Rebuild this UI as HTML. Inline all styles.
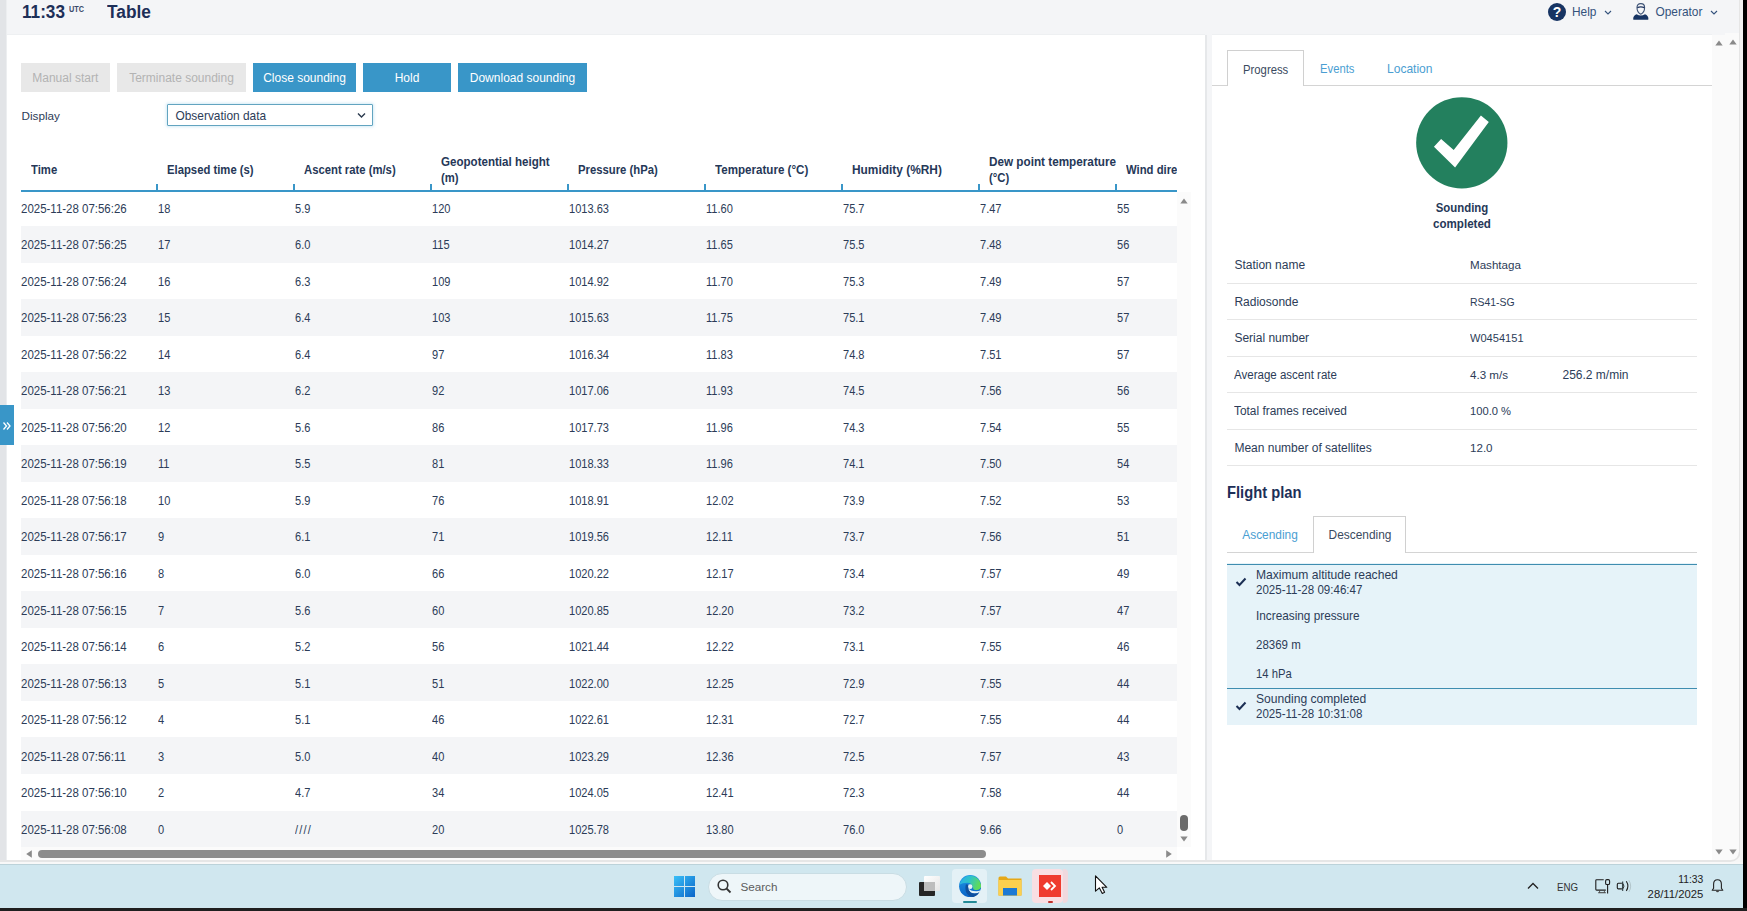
<!DOCTYPE html><html><head><meta charset="utf-8"><style>
html,body{margin:0;padding:0;}
body{width:1747px;height:911px;overflow:hidden;position:relative;background:#f4f5f7;font-family:"Liberation Sans",sans-serif;}
.t{position:absolute;white-space:nowrap;}
.r{position:absolute;}
svg{position:absolute;}
</style></head><body>
<div class="r" style="left:0px;top:0px;width:5.5px;height:860px;background:#e2e4e7;"></div>
<div class="r" style="left:5.5px;top:0px;width:1.5px;height:860px;background:#eceef0;"></div>
<div class="t" style="left:22.00px;top:2px;font-size:17.5px;line-height:20px;color:#1d2f58;font-weight:bold;transform:scaleX(0.98);transform-origin:0 0;">11:33</div>
<div class="t" style="left:69.00px;top:-1px;font-size:8.8px;line-height:20px;color:#3a4a6a;font-weight:bold;transform:scaleX(0.83);transform-origin:0 0;">UTC</div>
<div class="t" style="left:107.00px;top:2px;font-size:18.7px;line-height:20px;color:#1d2f58;font-weight:bold;transform:scaleX(0.925);transform-origin:0 0;">Table</div>
<div class="r" style="left:7px;top:35px;width:1198px;height:825px;background:#ffffff;"></div>
<div class="r" style="left:21px;top:62.5px;width:88.5px;height:29.3px;background:#e8e8e8;"></div>
<div class="t" style="left:-134.75px;width:400px;text-align:center;top:68px;font-size:12px;line-height:20px;color:#b3b3b3;font-weight:normal;">Manual start</div>
<div class="r" style="left:117px;top:62.5px;width:129px;height:29.3px;background:#e8e8e8;"></div>
<div class="t" style="left:-18.50px;width:400px;text-align:center;top:68px;font-size:12px;line-height:20px;color:#b3b3b3;font-weight:normal;">Terminate sounding</div>
<div class="r" style="left:253px;top:62.5px;width:103px;height:29.3px;background:#3996c8;"></div>
<div class="t" style="left:104.50px;width:400px;text-align:center;top:68px;font-size:12px;line-height:20px;color:#ffffff;font-weight:normal;">Close sounding</div>
<div class="r" style="left:363px;top:62.5px;width:88px;height:29.3px;background:#3996c8;"></div>
<div class="t" style="left:207.00px;width:400px;text-align:center;top:68px;font-size:12px;line-height:20px;color:#ffffff;font-weight:normal;">Hold</div>
<div class="r" style="left:458px;top:62.5px;width:129px;height:29.3px;background:#3996c8;"></div>
<div class="t" style="left:322.50px;width:400px;text-align:center;top:68px;font-size:12px;line-height:20px;color:#ffffff;font-weight:normal;">Download sounding</div>
<div class="t" style="left:21.50px;top:106px;font-size:11.7px;line-height:20px;color:#2c3c58;font-weight:normal;">Display</div>
<div class="r" style="left:167px;top:104px;width:206px;height:22px;background:#ffffff;box-sizing:border-box;border:1px solid #62a4c0;border-radius:1px;box-shadow:0 0 3px 1px rgba(130,195,230,0.35);"></div>
<div class="t" style="left:175.50px;top:106px;font-size:11.9px;line-height:20px;color:#2c3c58;font-weight:normal;">Observation data</div>
<svg style="left:357px;top:112px" width="9" height="7" viewBox="0 0 9 7"><path d="M1 1.5 L4.5 5 L8 1.5" fill="none" stroke="#2b3a4e" stroke-width="1.4"/></svg>
<div class="r" style="left:21px;top:140px;width:1156px;height:720px;overflow:hidden">
<div class="t" style="left:10.00px;top:20px;font-size:11.9px;line-height:20px;color:#263858;font-weight:bold;transform:scaleX(0.95);transform-origin:0 0;">Time</div>
<div class="t" style="left:146.00px;top:20px;font-size:11.9px;line-height:20px;color:#263858;font-weight:bold;transform:scaleX(0.95);transform-origin:0 0;">Elapsed time (s)</div>
<div class="t" style="left:283.00px;top:20px;font-size:11.9px;line-height:20px;color:#263858;font-weight:bold;transform:scaleX(0.95);transform-origin:0 0;">Ascent rate (m/s)</div>
<div class="t" style="left:420.00px;top:12px;font-size:11.9px;line-height:20px;color:#263858;font-weight:bold;transform:scaleX(0.973);transform-origin:0 0;">Geopotential height</div>
<div class="t" style="left:420.00px;top:28px;font-size:11.9px;line-height:20px;color:#263858;font-weight:bold;transform:scaleX(0.95);transform-origin:0 0;">(m)</div>
<div class="t" style="left:557.00px;top:20px;font-size:11.9px;line-height:20px;color:#263858;font-weight:bold;transform:scaleX(0.95);transform-origin:0 0;">Pressure (hPa)</div>
<div class="t" style="left:694.00px;top:20px;font-size:11.9px;line-height:20px;color:#263858;font-weight:bold;transform:scaleX(0.975);transform-origin:0 0;">Temperature (°C)</div>
<div class="t" style="left:831.00px;top:20px;font-size:11.9px;line-height:20px;color:#263858;font-weight:bold;">Humidity (%RH)</div>
<div class="t" style="left:968.00px;top:12px;font-size:11.9px;line-height:20px;color:#263858;font-weight:bold;transform:scaleX(0.986);transform-origin:0 0;">Dew point temperature</div>
<div class="t" style="left:968.00px;top:28px;font-size:11.9px;line-height:20px;color:#263858;font-weight:bold;transform:scaleX(0.95);transform-origin:0 0;">(°C)</div>
<div class="t" style="left:1105.00px;top:20px;font-size:11.9px;line-height:20px;color:#263858;font-weight:bold;transform:scaleX(0.95);transform-origin:0 0;">Wind dire</div>
<div class="r" style="left:0px;top:49.5px;width:1156px;height:2.5px;background:#3996c8;"></div>
<div class="r" style="left:135px;top:44px;width:2px;height:6px;background:#3996c8;"></div>
<div class="r" style="left:272px;top:44px;width:2px;height:6px;background:#3996c8;"></div>
<div class="r" style="left:409px;top:44px;width:2px;height:6px;background:#3996c8;"></div>
<div class="r" style="left:546px;top:44px;width:2px;height:6px;background:#3996c8;"></div>
<div class="r" style="left:683px;top:44px;width:2px;height:6px;background:#3996c8;"></div>
<div class="r" style="left:820px;top:44px;width:2px;height:6px;background:#3996c8;"></div>
<div class="r" style="left:957px;top:44px;width:2px;height:6px;background:#3996c8;"></div>
<div class="r" style="left:1094px;top:44px;width:2px;height:6px;background:#3996c8;"></div>
<div class="t" style="left:0.00px;top:59px;font-size:11.9px;line-height:20px;color:#2c3c58;font-weight:normal;transform:scaleX(0.965);transform-origin:0 0;">2025-11-28 07:56:26</div>
<div class="t" style="left:136.90px;top:59px;font-size:11.9px;line-height:20px;color:#2c3c58;font-weight:normal;transform:scaleX(0.93);transform-origin:0 0;">18</div>
<div class="t" style="left:273.90px;top:59px;font-size:11.9px;line-height:20px;color:#2c3c58;font-weight:normal;transform:scaleX(0.93);transform-origin:0 0;">5.9</div>
<div class="t" style="left:410.90px;top:59px;font-size:11.9px;line-height:20px;color:#2c3c58;font-weight:normal;transform:scaleX(0.93);transform-origin:0 0;">120</div>
<div class="t" style="left:547.90px;top:59px;font-size:11.9px;line-height:20px;color:#2c3c58;font-weight:normal;transform:scaleX(0.93);transform-origin:0 0;">1013.63</div>
<div class="t" style="left:684.90px;top:59px;font-size:11.9px;line-height:20px;color:#2c3c58;font-weight:normal;transform:scaleX(0.93);transform-origin:0 0;">11.60</div>
<div class="t" style="left:821.90px;top:59px;font-size:11.9px;line-height:20px;color:#2c3c58;font-weight:normal;transform:scaleX(0.93);transform-origin:0 0;">75.7</div>
<div class="t" style="left:958.90px;top:59px;font-size:11.9px;line-height:20px;color:#2c3c58;font-weight:normal;transform:scaleX(0.93);transform-origin:0 0;">7.47</div>
<div class="t" style="left:1095.90px;top:59px;font-size:11.9px;line-height:20px;color:#2c3c58;font-weight:normal;transform:scaleX(0.93);transform-origin:0 0;">55</div>
<div class="r" style="left:0px;top:86.03px;width:1156px;height:36.53px;background:#f4f5f7;"></div>
<div class="t" style="left:0.00px;top:95px;font-size:11.9px;line-height:20px;color:#2c3c58;font-weight:normal;transform:scaleX(0.965);transform-origin:0 0;">2025-11-28 07:56:25</div>
<div class="t" style="left:136.90px;top:95px;font-size:11.9px;line-height:20px;color:#2c3c58;font-weight:normal;transform:scaleX(0.93);transform-origin:0 0;">17</div>
<div class="t" style="left:273.90px;top:95px;font-size:11.9px;line-height:20px;color:#2c3c58;font-weight:normal;transform:scaleX(0.93);transform-origin:0 0;">6.0</div>
<div class="t" style="left:410.90px;top:95px;font-size:11.9px;line-height:20px;color:#2c3c58;font-weight:normal;transform:scaleX(0.93);transform-origin:0 0;">115</div>
<div class="t" style="left:547.90px;top:95px;font-size:11.9px;line-height:20px;color:#2c3c58;font-weight:normal;transform:scaleX(0.93);transform-origin:0 0;">1014.27</div>
<div class="t" style="left:684.90px;top:95px;font-size:11.9px;line-height:20px;color:#2c3c58;font-weight:normal;transform:scaleX(0.93);transform-origin:0 0;">11.65</div>
<div class="t" style="left:821.90px;top:95px;font-size:11.9px;line-height:20px;color:#2c3c58;font-weight:normal;transform:scaleX(0.93);transform-origin:0 0;">75.5</div>
<div class="t" style="left:958.90px;top:95px;font-size:11.9px;line-height:20px;color:#2c3c58;font-weight:normal;transform:scaleX(0.93);transform-origin:0 0;">7.48</div>
<div class="t" style="left:1095.90px;top:95px;font-size:11.9px;line-height:20px;color:#2c3c58;font-weight:normal;transform:scaleX(0.93);transform-origin:0 0;">56</div>
<div class="t" style="left:0.00px;top:132px;font-size:11.9px;line-height:20px;color:#2c3c58;font-weight:normal;transform:scaleX(0.965);transform-origin:0 0;">2025-11-28 07:56:24</div>
<div class="t" style="left:136.90px;top:132px;font-size:11.9px;line-height:20px;color:#2c3c58;font-weight:normal;transform:scaleX(0.93);transform-origin:0 0;">16</div>
<div class="t" style="left:273.90px;top:132px;font-size:11.9px;line-height:20px;color:#2c3c58;font-weight:normal;transform:scaleX(0.93);transform-origin:0 0;">6.3</div>
<div class="t" style="left:410.90px;top:132px;font-size:11.9px;line-height:20px;color:#2c3c58;font-weight:normal;transform:scaleX(0.93);transform-origin:0 0;">109</div>
<div class="t" style="left:547.90px;top:132px;font-size:11.9px;line-height:20px;color:#2c3c58;font-weight:normal;transform:scaleX(0.93);transform-origin:0 0;">1014.92</div>
<div class="t" style="left:684.90px;top:132px;font-size:11.9px;line-height:20px;color:#2c3c58;font-weight:normal;transform:scaleX(0.93);transform-origin:0 0;">11.70</div>
<div class="t" style="left:821.90px;top:132px;font-size:11.9px;line-height:20px;color:#2c3c58;font-weight:normal;transform:scaleX(0.93);transform-origin:0 0;">75.3</div>
<div class="t" style="left:958.90px;top:132px;font-size:11.9px;line-height:20px;color:#2c3c58;font-weight:normal;transform:scaleX(0.93);transform-origin:0 0;">7.49</div>
<div class="t" style="left:1095.90px;top:132px;font-size:11.9px;line-height:20px;color:#2c3c58;font-weight:normal;transform:scaleX(0.93);transform-origin:0 0;">57</div>
<div class="r" style="left:0px;top:159.09px;width:1156px;height:36.53px;background:#f4f5f7;"></div>
<div class="t" style="left:0.00px;top:168px;font-size:11.9px;line-height:20px;color:#2c3c58;font-weight:normal;transform:scaleX(0.965);transform-origin:0 0;">2025-11-28 07:56:23</div>
<div class="t" style="left:136.90px;top:168px;font-size:11.9px;line-height:20px;color:#2c3c58;font-weight:normal;transform:scaleX(0.93);transform-origin:0 0;">15</div>
<div class="t" style="left:273.90px;top:168px;font-size:11.9px;line-height:20px;color:#2c3c58;font-weight:normal;transform:scaleX(0.93);transform-origin:0 0;">6.4</div>
<div class="t" style="left:410.90px;top:168px;font-size:11.9px;line-height:20px;color:#2c3c58;font-weight:normal;transform:scaleX(0.93);transform-origin:0 0;">103</div>
<div class="t" style="left:547.90px;top:168px;font-size:11.9px;line-height:20px;color:#2c3c58;font-weight:normal;transform:scaleX(0.93);transform-origin:0 0;">1015.63</div>
<div class="t" style="left:684.90px;top:168px;font-size:11.9px;line-height:20px;color:#2c3c58;font-weight:normal;transform:scaleX(0.93);transform-origin:0 0;">11.75</div>
<div class="t" style="left:821.90px;top:168px;font-size:11.9px;line-height:20px;color:#2c3c58;font-weight:normal;transform:scaleX(0.93);transform-origin:0 0;">75.1</div>
<div class="t" style="left:958.90px;top:168px;font-size:11.9px;line-height:20px;color:#2c3c58;font-weight:normal;transform:scaleX(0.93);transform-origin:0 0;">7.49</div>
<div class="t" style="left:1095.90px;top:168px;font-size:11.9px;line-height:20px;color:#2c3c58;font-weight:normal;transform:scaleX(0.93);transform-origin:0 0;">57</div>
<div class="t" style="left:0.00px;top:205px;font-size:11.9px;line-height:20px;color:#2c3c58;font-weight:normal;transform:scaleX(0.965);transform-origin:0 0;">2025-11-28 07:56:22</div>
<div class="t" style="left:136.90px;top:205px;font-size:11.9px;line-height:20px;color:#2c3c58;font-weight:normal;transform:scaleX(0.93);transform-origin:0 0;">14</div>
<div class="t" style="left:273.90px;top:205px;font-size:11.9px;line-height:20px;color:#2c3c58;font-weight:normal;transform:scaleX(0.93);transform-origin:0 0;">6.4</div>
<div class="t" style="left:410.90px;top:205px;font-size:11.9px;line-height:20px;color:#2c3c58;font-weight:normal;transform:scaleX(0.93);transform-origin:0 0;">97</div>
<div class="t" style="left:547.90px;top:205px;font-size:11.9px;line-height:20px;color:#2c3c58;font-weight:normal;transform:scaleX(0.93);transform-origin:0 0;">1016.34</div>
<div class="t" style="left:684.90px;top:205px;font-size:11.9px;line-height:20px;color:#2c3c58;font-weight:normal;transform:scaleX(0.93);transform-origin:0 0;">11.83</div>
<div class="t" style="left:821.90px;top:205px;font-size:11.9px;line-height:20px;color:#2c3c58;font-weight:normal;transform:scaleX(0.93);transform-origin:0 0;">74.8</div>
<div class="t" style="left:958.90px;top:205px;font-size:11.9px;line-height:20px;color:#2c3c58;font-weight:normal;transform:scaleX(0.93);transform-origin:0 0;">7.51</div>
<div class="t" style="left:1095.90px;top:205px;font-size:11.9px;line-height:20px;color:#2c3c58;font-weight:normal;transform:scaleX(0.93);transform-origin:0 0;">57</div>
<div class="r" style="left:0px;top:232.15px;width:1156px;height:36.53px;background:#f4f5f7;"></div>
<div class="t" style="left:0.00px;top:241px;font-size:11.9px;line-height:20px;color:#2c3c58;font-weight:normal;transform:scaleX(0.965);transform-origin:0 0;">2025-11-28 07:56:21</div>
<div class="t" style="left:136.90px;top:241px;font-size:11.9px;line-height:20px;color:#2c3c58;font-weight:normal;transform:scaleX(0.93);transform-origin:0 0;">13</div>
<div class="t" style="left:273.90px;top:241px;font-size:11.9px;line-height:20px;color:#2c3c58;font-weight:normal;transform:scaleX(0.93);transform-origin:0 0;">6.2</div>
<div class="t" style="left:410.90px;top:241px;font-size:11.9px;line-height:20px;color:#2c3c58;font-weight:normal;transform:scaleX(0.93);transform-origin:0 0;">92</div>
<div class="t" style="left:547.90px;top:241px;font-size:11.9px;line-height:20px;color:#2c3c58;font-weight:normal;transform:scaleX(0.93);transform-origin:0 0;">1017.06</div>
<div class="t" style="left:684.90px;top:241px;font-size:11.9px;line-height:20px;color:#2c3c58;font-weight:normal;transform:scaleX(0.93);transform-origin:0 0;">11.93</div>
<div class="t" style="left:821.90px;top:241px;font-size:11.9px;line-height:20px;color:#2c3c58;font-weight:normal;transform:scaleX(0.93);transform-origin:0 0;">74.5</div>
<div class="t" style="left:958.90px;top:241px;font-size:11.9px;line-height:20px;color:#2c3c58;font-weight:normal;transform:scaleX(0.93);transform-origin:0 0;">7.56</div>
<div class="t" style="left:1095.90px;top:241px;font-size:11.9px;line-height:20px;color:#2c3c58;font-weight:normal;transform:scaleX(0.93);transform-origin:0 0;">56</div>
<div class="t" style="left:0.00px;top:278px;font-size:11.9px;line-height:20px;color:#2c3c58;font-weight:normal;transform:scaleX(0.965);transform-origin:0 0;">2025-11-28 07:56:20</div>
<div class="t" style="left:136.90px;top:278px;font-size:11.9px;line-height:20px;color:#2c3c58;font-weight:normal;transform:scaleX(0.93);transform-origin:0 0;">12</div>
<div class="t" style="left:273.90px;top:278px;font-size:11.9px;line-height:20px;color:#2c3c58;font-weight:normal;transform:scaleX(0.93);transform-origin:0 0;">5.6</div>
<div class="t" style="left:410.90px;top:278px;font-size:11.9px;line-height:20px;color:#2c3c58;font-weight:normal;transform:scaleX(0.93);transform-origin:0 0;">86</div>
<div class="t" style="left:547.90px;top:278px;font-size:11.9px;line-height:20px;color:#2c3c58;font-weight:normal;transform:scaleX(0.93);transform-origin:0 0;">1017.73</div>
<div class="t" style="left:684.90px;top:278px;font-size:11.9px;line-height:20px;color:#2c3c58;font-weight:normal;transform:scaleX(0.93);transform-origin:0 0;">11.96</div>
<div class="t" style="left:821.90px;top:278px;font-size:11.9px;line-height:20px;color:#2c3c58;font-weight:normal;transform:scaleX(0.93);transform-origin:0 0;">74.3</div>
<div class="t" style="left:958.90px;top:278px;font-size:11.9px;line-height:20px;color:#2c3c58;font-weight:normal;transform:scaleX(0.93);transform-origin:0 0;">7.54</div>
<div class="t" style="left:1095.90px;top:278px;font-size:11.9px;line-height:20px;color:#2c3c58;font-weight:normal;transform:scaleX(0.93);transform-origin:0 0;">55</div>
<div class="r" style="left:0px;top:305.21px;width:1156px;height:36.53px;background:#f4f5f7;"></div>
<div class="t" style="left:0.00px;top:314px;font-size:11.9px;line-height:20px;color:#2c3c58;font-weight:normal;transform:scaleX(0.965);transform-origin:0 0;">2025-11-28 07:56:19</div>
<div class="t" style="left:136.90px;top:314px;font-size:11.9px;line-height:20px;color:#2c3c58;font-weight:normal;transform:scaleX(0.93);transform-origin:0 0;">11</div>
<div class="t" style="left:273.90px;top:314px;font-size:11.9px;line-height:20px;color:#2c3c58;font-weight:normal;transform:scaleX(0.93);transform-origin:0 0;">5.5</div>
<div class="t" style="left:410.90px;top:314px;font-size:11.9px;line-height:20px;color:#2c3c58;font-weight:normal;transform:scaleX(0.93);transform-origin:0 0;">81</div>
<div class="t" style="left:547.90px;top:314px;font-size:11.9px;line-height:20px;color:#2c3c58;font-weight:normal;transform:scaleX(0.93);transform-origin:0 0;">1018.33</div>
<div class="t" style="left:684.90px;top:314px;font-size:11.9px;line-height:20px;color:#2c3c58;font-weight:normal;transform:scaleX(0.93);transform-origin:0 0;">11.96</div>
<div class="t" style="left:821.90px;top:314px;font-size:11.9px;line-height:20px;color:#2c3c58;font-weight:normal;transform:scaleX(0.93);transform-origin:0 0;">74.1</div>
<div class="t" style="left:958.90px;top:314px;font-size:11.9px;line-height:20px;color:#2c3c58;font-weight:normal;transform:scaleX(0.93);transform-origin:0 0;">7.50</div>
<div class="t" style="left:1095.90px;top:314px;font-size:11.9px;line-height:20px;color:#2c3c58;font-weight:normal;transform:scaleX(0.93);transform-origin:0 0;">54</div>
<div class="t" style="left:0.00px;top:351px;font-size:11.9px;line-height:20px;color:#2c3c58;font-weight:normal;transform:scaleX(0.965);transform-origin:0 0;">2025-11-28 07:56:18</div>
<div class="t" style="left:136.90px;top:351px;font-size:11.9px;line-height:20px;color:#2c3c58;font-weight:normal;transform:scaleX(0.93);transform-origin:0 0;">10</div>
<div class="t" style="left:273.90px;top:351px;font-size:11.9px;line-height:20px;color:#2c3c58;font-weight:normal;transform:scaleX(0.93);transform-origin:0 0;">5.9</div>
<div class="t" style="left:410.90px;top:351px;font-size:11.9px;line-height:20px;color:#2c3c58;font-weight:normal;transform:scaleX(0.93);transform-origin:0 0;">76</div>
<div class="t" style="left:547.90px;top:351px;font-size:11.9px;line-height:20px;color:#2c3c58;font-weight:normal;transform:scaleX(0.93);transform-origin:0 0;">1018.91</div>
<div class="t" style="left:684.90px;top:351px;font-size:11.9px;line-height:20px;color:#2c3c58;font-weight:normal;transform:scaleX(0.93);transform-origin:0 0;">12.02</div>
<div class="t" style="left:821.90px;top:351px;font-size:11.9px;line-height:20px;color:#2c3c58;font-weight:normal;transform:scaleX(0.93);transform-origin:0 0;">73.9</div>
<div class="t" style="left:958.90px;top:351px;font-size:11.9px;line-height:20px;color:#2c3c58;font-weight:normal;transform:scaleX(0.93);transform-origin:0 0;">7.52</div>
<div class="t" style="left:1095.90px;top:351px;font-size:11.9px;line-height:20px;color:#2c3c58;font-weight:normal;transform:scaleX(0.93);transform-origin:0 0;">53</div>
<div class="r" style="left:0px;top:378.27px;width:1156px;height:36.53px;background:#f4f5f7;"></div>
<div class="t" style="left:0.00px;top:387px;font-size:11.9px;line-height:20px;color:#2c3c58;font-weight:normal;transform:scaleX(0.965);transform-origin:0 0;">2025-11-28 07:56:17</div>
<div class="t" style="left:136.90px;top:387px;font-size:11.9px;line-height:20px;color:#2c3c58;font-weight:normal;transform:scaleX(0.93);transform-origin:0 0;">9</div>
<div class="t" style="left:273.90px;top:387px;font-size:11.9px;line-height:20px;color:#2c3c58;font-weight:normal;transform:scaleX(0.93);transform-origin:0 0;">6.1</div>
<div class="t" style="left:410.90px;top:387px;font-size:11.9px;line-height:20px;color:#2c3c58;font-weight:normal;transform:scaleX(0.93);transform-origin:0 0;">71</div>
<div class="t" style="left:547.90px;top:387px;font-size:11.9px;line-height:20px;color:#2c3c58;font-weight:normal;transform:scaleX(0.93);transform-origin:0 0;">1019.56</div>
<div class="t" style="left:684.90px;top:387px;font-size:11.9px;line-height:20px;color:#2c3c58;font-weight:normal;transform:scaleX(0.93);transform-origin:0 0;">12.11</div>
<div class="t" style="left:821.90px;top:387px;font-size:11.9px;line-height:20px;color:#2c3c58;font-weight:normal;transform:scaleX(0.93);transform-origin:0 0;">73.7</div>
<div class="t" style="left:958.90px;top:387px;font-size:11.9px;line-height:20px;color:#2c3c58;font-weight:normal;transform:scaleX(0.93);transform-origin:0 0;">7.56</div>
<div class="t" style="left:1095.90px;top:387px;font-size:11.9px;line-height:20px;color:#2c3c58;font-weight:normal;transform:scaleX(0.93);transform-origin:0 0;">51</div>
<div class="t" style="left:0.00px;top:424px;font-size:11.9px;line-height:20px;color:#2c3c58;font-weight:normal;transform:scaleX(0.965);transform-origin:0 0;">2025-11-28 07:56:16</div>
<div class="t" style="left:136.90px;top:424px;font-size:11.9px;line-height:20px;color:#2c3c58;font-weight:normal;transform:scaleX(0.93);transform-origin:0 0;">8</div>
<div class="t" style="left:273.90px;top:424px;font-size:11.9px;line-height:20px;color:#2c3c58;font-weight:normal;transform:scaleX(0.93);transform-origin:0 0;">6.0</div>
<div class="t" style="left:410.90px;top:424px;font-size:11.9px;line-height:20px;color:#2c3c58;font-weight:normal;transform:scaleX(0.93);transform-origin:0 0;">66</div>
<div class="t" style="left:547.90px;top:424px;font-size:11.9px;line-height:20px;color:#2c3c58;font-weight:normal;transform:scaleX(0.93);transform-origin:0 0;">1020.22</div>
<div class="t" style="left:684.90px;top:424px;font-size:11.9px;line-height:20px;color:#2c3c58;font-weight:normal;transform:scaleX(0.93);transform-origin:0 0;">12.17</div>
<div class="t" style="left:821.90px;top:424px;font-size:11.9px;line-height:20px;color:#2c3c58;font-weight:normal;transform:scaleX(0.93);transform-origin:0 0;">73.4</div>
<div class="t" style="left:958.90px;top:424px;font-size:11.9px;line-height:20px;color:#2c3c58;font-weight:normal;transform:scaleX(0.93);transform-origin:0 0;">7.57</div>
<div class="t" style="left:1095.90px;top:424px;font-size:11.9px;line-height:20px;color:#2c3c58;font-weight:normal;transform:scaleX(0.93);transform-origin:0 0;">49</div>
<div class="r" style="left:0px;top:451.33px;width:1156px;height:36.53px;background:#f4f5f7;"></div>
<div class="t" style="left:0.00px;top:461px;font-size:11.9px;line-height:20px;color:#2c3c58;font-weight:normal;transform:scaleX(0.965);transform-origin:0 0;">2025-11-28 07:56:15</div>
<div class="t" style="left:136.90px;top:461px;font-size:11.9px;line-height:20px;color:#2c3c58;font-weight:normal;transform:scaleX(0.93);transform-origin:0 0;">7</div>
<div class="t" style="left:273.90px;top:461px;font-size:11.9px;line-height:20px;color:#2c3c58;font-weight:normal;transform:scaleX(0.93);transform-origin:0 0;">5.6</div>
<div class="t" style="left:410.90px;top:461px;font-size:11.9px;line-height:20px;color:#2c3c58;font-weight:normal;transform:scaleX(0.93);transform-origin:0 0;">60</div>
<div class="t" style="left:547.90px;top:461px;font-size:11.9px;line-height:20px;color:#2c3c58;font-weight:normal;transform:scaleX(0.93);transform-origin:0 0;">1020.85</div>
<div class="t" style="left:684.90px;top:461px;font-size:11.9px;line-height:20px;color:#2c3c58;font-weight:normal;transform:scaleX(0.93);transform-origin:0 0;">12.20</div>
<div class="t" style="left:821.90px;top:461px;font-size:11.9px;line-height:20px;color:#2c3c58;font-weight:normal;transform:scaleX(0.93);transform-origin:0 0;">73.2</div>
<div class="t" style="left:958.90px;top:461px;font-size:11.9px;line-height:20px;color:#2c3c58;font-weight:normal;transform:scaleX(0.93);transform-origin:0 0;">7.57</div>
<div class="t" style="left:1095.90px;top:461px;font-size:11.9px;line-height:20px;color:#2c3c58;font-weight:normal;transform:scaleX(0.93);transform-origin:0 0;">47</div>
<div class="t" style="left:0.00px;top:497px;font-size:11.9px;line-height:20px;color:#2c3c58;font-weight:normal;transform:scaleX(0.965);transform-origin:0 0;">2025-11-28 07:56:14</div>
<div class="t" style="left:136.90px;top:497px;font-size:11.9px;line-height:20px;color:#2c3c58;font-weight:normal;transform:scaleX(0.93);transform-origin:0 0;">6</div>
<div class="t" style="left:273.90px;top:497px;font-size:11.9px;line-height:20px;color:#2c3c58;font-weight:normal;transform:scaleX(0.93);transform-origin:0 0;">5.2</div>
<div class="t" style="left:410.90px;top:497px;font-size:11.9px;line-height:20px;color:#2c3c58;font-weight:normal;transform:scaleX(0.93);transform-origin:0 0;">56</div>
<div class="t" style="left:547.90px;top:497px;font-size:11.9px;line-height:20px;color:#2c3c58;font-weight:normal;transform:scaleX(0.93);transform-origin:0 0;">1021.44</div>
<div class="t" style="left:684.90px;top:497px;font-size:11.9px;line-height:20px;color:#2c3c58;font-weight:normal;transform:scaleX(0.93);transform-origin:0 0;">12.22</div>
<div class="t" style="left:821.90px;top:497px;font-size:11.9px;line-height:20px;color:#2c3c58;font-weight:normal;transform:scaleX(0.93);transform-origin:0 0;">73.1</div>
<div class="t" style="left:958.90px;top:497px;font-size:11.9px;line-height:20px;color:#2c3c58;font-weight:normal;transform:scaleX(0.93);transform-origin:0 0;">7.55</div>
<div class="t" style="left:1095.90px;top:497px;font-size:11.9px;line-height:20px;color:#2c3c58;font-weight:normal;transform:scaleX(0.93);transform-origin:0 0;">46</div>
<div class="r" style="left:0px;top:524.39px;width:1156px;height:36.53px;background:#f4f5f7;"></div>
<div class="t" style="left:0.00px;top:534px;font-size:11.9px;line-height:20px;color:#2c3c58;font-weight:normal;transform:scaleX(0.965);transform-origin:0 0;">2025-11-28 07:56:13</div>
<div class="t" style="left:136.90px;top:534px;font-size:11.9px;line-height:20px;color:#2c3c58;font-weight:normal;transform:scaleX(0.93);transform-origin:0 0;">5</div>
<div class="t" style="left:273.90px;top:534px;font-size:11.9px;line-height:20px;color:#2c3c58;font-weight:normal;transform:scaleX(0.93);transform-origin:0 0;">5.1</div>
<div class="t" style="left:410.90px;top:534px;font-size:11.9px;line-height:20px;color:#2c3c58;font-weight:normal;transform:scaleX(0.93);transform-origin:0 0;">51</div>
<div class="t" style="left:547.90px;top:534px;font-size:11.9px;line-height:20px;color:#2c3c58;font-weight:normal;transform:scaleX(0.93);transform-origin:0 0;">1022.00</div>
<div class="t" style="left:684.90px;top:534px;font-size:11.9px;line-height:20px;color:#2c3c58;font-weight:normal;transform:scaleX(0.93);transform-origin:0 0;">12.25</div>
<div class="t" style="left:821.90px;top:534px;font-size:11.9px;line-height:20px;color:#2c3c58;font-weight:normal;transform:scaleX(0.93);transform-origin:0 0;">72.9</div>
<div class="t" style="left:958.90px;top:534px;font-size:11.9px;line-height:20px;color:#2c3c58;font-weight:normal;transform:scaleX(0.93);transform-origin:0 0;">7.55</div>
<div class="t" style="left:1095.90px;top:534px;font-size:11.9px;line-height:20px;color:#2c3c58;font-weight:normal;transform:scaleX(0.93);transform-origin:0 0;">44</div>
<div class="t" style="left:0.00px;top:570px;font-size:11.9px;line-height:20px;color:#2c3c58;font-weight:normal;transform:scaleX(0.965);transform-origin:0 0;">2025-11-28 07:56:12</div>
<div class="t" style="left:136.90px;top:570px;font-size:11.9px;line-height:20px;color:#2c3c58;font-weight:normal;transform:scaleX(0.93);transform-origin:0 0;">4</div>
<div class="t" style="left:273.90px;top:570px;font-size:11.9px;line-height:20px;color:#2c3c58;font-weight:normal;transform:scaleX(0.93);transform-origin:0 0;">5.1</div>
<div class="t" style="left:410.90px;top:570px;font-size:11.9px;line-height:20px;color:#2c3c58;font-weight:normal;transform:scaleX(0.93);transform-origin:0 0;">46</div>
<div class="t" style="left:547.90px;top:570px;font-size:11.9px;line-height:20px;color:#2c3c58;font-weight:normal;transform:scaleX(0.93);transform-origin:0 0;">1022.61</div>
<div class="t" style="left:684.90px;top:570px;font-size:11.9px;line-height:20px;color:#2c3c58;font-weight:normal;transform:scaleX(0.93);transform-origin:0 0;">12.31</div>
<div class="t" style="left:821.90px;top:570px;font-size:11.9px;line-height:20px;color:#2c3c58;font-weight:normal;transform:scaleX(0.93);transform-origin:0 0;">72.7</div>
<div class="t" style="left:958.90px;top:570px;font-size:11.9px;line-height:20px;color:#2c3c58;font-weight:normal;transform:scaleX(0.93);transform-origin:0 0;">7.55</div>
<div class="t" style="left:1095.90px;top:570px;font-size:11.9px;line-height:20px;color:#2c3c58;font-weight:normal;transform:scaleX(0.93);transform-origin:0 0;">44</div>
<div class="r" style="left:0px;top:597.45px;width:1156px;height:36.53px;background:#f4f5f7;"></div>
<div class="t" style="left:0.00px;top:607px;font-size:11.9px;line-height:20px;color:#2c3c58;font-weight:normal;transform:scaleX(0.965);transform-origin:0 0;">2025-11-28 07:56:11</div>
<div class="t" style="left:136.90px;top:607px;font-size:11.9px;line-height:20px;color:#2c3c58;font-weight:normal;transform:scaleX(0.93);transform-origin:0 0;">3</div>
<div class="t" style="left:273.90px;top:607px;font-size:11.9px;line-height:20px;color:#2c3c58;font-weight:normal;transform:scaleX(0.93);transform-origin:0 0;">5.0</div>
<div class="t" style="left:410.90px;top:607px;font-size:11.9px;line-height:20px;color:#2c3c58;font-weight:normal;transform:scaleX(0.93);transform-origin:0 0;">40</div>
<div class="t" style="left:547.90px;top:607px;font-size:11.9px;line-height:20px;color:#2c3c58;font-weight:normal;transform:scaleX(0.93);transform-origin:0 0;">1023.29</div>
<div class="t" style="left:684.90px;top:607px;font-size:11.9px;line-height:20px;color:#2c3c58;font-weight:normal;transform:scaleX(0.93);transform-origin:0 0;">12.36</div>
<div class="t" style="left:821.90px;top:607px;font-size:11.9px;line-height:20px;color:#2c3c58;font-weight:normal;transform:scaleX(0.93);transform-origin:0 0;">72.5</div>
<div class="t" style="left:958.90px;top:607px;font-size:11.9px;line-height:20px;color:#2c3c58;font-weight:normal;transform:scaleX(0.93);transform-origin:0 0;">7.57</div>
<div class="t" style="left:1095.90px;top:607px;font-size:11.9px;line-height:20px;color:#2c3c58;font-weight:normal;transform:scaleX(0.93);transform-origin:0 0;">43</div>
<div class="t" style="left:0.00px;top:643px;font-size:11.9px;line-height:20px;color:#2c3c58;font-weight:normal;transform:scaleX(0.965);transform-origin:0 0;">2025-11-28 07:56:10</div>
<div class="t" style="left:136.90px;top:643px;font-size:11.9px;line-height:20px;color:#2c3c58;font-weight:normal;transform:scaleX(0.93);transform-origin:0 0;">2</div>
<div class="t" style="left:273.90px;top:643px;font-size:11.9px;line-height:20px;color:#2c3c58;font-weight:normal;transform:scaleX(0.93);transform-origin:0 0;">4.7</div>
<div class="t" style="left:410.90px;top:643px;font-size:11.9px;line-height:20px;color:#2c3c58;font-weight:normal;transform:scaleX(0.93);transform-origin:0 0;">34</div>
<div class="t" style="left:547.90px;top:643px;font-size:11.9px;line-height:20px;color:#2c3c58;font-weight:normal;transform:scaleX(0.93);transform-origin:0 0;">1024.05</div>
<div class="t" style="left:684.90px;top:643px;font-size:11.9px;line-height:20px;color:#2c3c58;font-weight:normal;transform:scaleX(0.93);transform-origin:0 0;">12.41</div>
<div class="t" style="left:821.90px;top:643px;font-size:11.9px;line-height:20px;color:#2c3c58;font-weight:normal;transform:scaleX(0.93);transform-origin:0 0;">72.3</div>
<div class="t" style="left:958.90px;top:643px;font-size:11.9px;line-height:20px;color:#2c3c58;font-weight:normal;transform:scaleX(0.93);transform-origin:0 0;">7.58</div>
<div class="t" style="left:1095.90px;top:643px;font-size:11.9px;line-height:20px;color:#2c3c58;font-weight:normal;transform:scaleX(0.93);transform-origin:0 0;">44</div>
<div class="r" style="left:0px;top:670.51px;width:1156px;height:36.53px;background:#f4f5f7;"></div>
<div class="t" style="left:0.00px;top:680px;font-size:11.9px;line-height:20px;color:#2c3c58;font-weight:normal;transform:scaleX(0.965);transform-origin:0 0;">2025-11-28 07:56:08</div>
<div class="t" style="left:136.90px;top:680px;font-size:11.9px;line-height:20px;color:#2c3c58;font-weight:normal;transform:scaleX(0.93);transform-origin:0 0;">0</div>
<div class="t" style="left:273.90px;top:680px;font-size:11.9px;line-height:20px;color:#2c3c58;font-weight:normal;transform:scaleX(0.93);transform-origin:0 0;letter-spacing:1.3px;">////</div>
<div class="t" style="left:410.90px;top:680px;font-size:11.9px;line-height:20px;color:#2c3c58;font-weight:normal;transform:scaleX(0.93);transform-origin:0 0;">20</div>
<div class="t" style="left:547.90px;top:680px;font-size:11.9px;line-height:20px;color:#2c3c58;font-weight:normal;transform:scaleX(0.93);transform-origin:0 0;">1025.78</div>
<div class="t" style="left:684.90px;top:680px;font-size:11.9px;line-height:20px;color:#2c3c58;font-weight:normal;transform:scaleX(0.93);transform-origin:0 0;">13.80</div>
<div class="t" style="left:821.90px;top:680px;font-size:11.9px;line-height:20px;color:#2c3c58;font-weight:normal;transform:scaleX(0.93);transform-origin:0 0;">76.0</div>
<div class="t" style="left:958.90px;top:680px;font-size:11.9px;line-height:20px;color:#2c3c58;font-weight:normal;transform:scaleX(0.93);transform-origin:0 0;">9.66</div>
<div class="t" style="left:1095.90px;top:680px;font-size:11.9px;line-height:20px;color:#2c3c58;font-weight:normal;transform:scaleX(0.93);transform-origin:0 0;">0</div>
</div>
<div class="r" style="left:1177px;top:192px;width:13.5px;height:655px;background:#fbfbfb;"></div>
<svg style="left:1179.8px;top:197.9px" width="8" height="6" viewBox="0 0 8 6"><path d="M0.3 5.6 L4 0.4 L7.7 5.6 Z" fill="#8a8a8a"/></svg>
<svg style="left:1180px;top:836px" width="8" height="6" viewBox="0 0 8 6"><path d="M0.3 0.4 L4 5.6 L7.7 0.4 Z" fill="#8a8a8a"/></svg>
<div class="r" style="left:1179.5px;top:815px;width:8.5px;height:15.5px;background:#6b6b6b;border-radius:4.5px;"></div>
<div class="r" style="left:21px;top:847px;width:1156px;height:13px;background:#fbfbfb;"></div>
<svg style="left:26px;top:850px" width="6" height="8" viewBox="0 0 6 8"><path d="M5.8 0.2 L0.2 4 L5.8 7.8 Z" fill="#8a8a8a"/></svg>
<svg style="left:1166px;top:850px" width="6" height="8" viewBox="0 0 6 8"><path d="M0.2 0.2 L5.8 4 L0.2 7.8 Z" fill="#8a8a8a"/></svg>
<div class="r" style="left:37.5px;top:849.5px;width:948px;height:8.5px;background:#8c8c8c;border-radius:4.25px;"></div>
<div class="r" style="left:1205px;top:35px;width:1.6px;height:825px;background:#e6e8ea;"></div>
<div class="r" style="left:7px;top:34px;width:1198px;height:1px;background:#eef0f2;"></div>
<div class="r" style="left:1212px;top:34px;width:500px;height:1px;background:#eef0f2;"></div>
<div class="r" style="left:0px;top:405px;width:14px;height:40px;background:#3996c8;"></div>
<svg style="left:2px;top:421px" width="10" height="10" viewBox="0 0 10 10"><path d="M1.5 1.5 L4.5 5 L1.5 8.5 M5 1.5 L8 5 L5 8.5" fill="none" stroke="#ffffff" stroke-width="1.3"/></svg>
<div class="r" style="left:1212px;top:35px;width:500px;height:825px;background:#ffffff;"></div>
<div class="r" style="left:1712px;top:35px;width:13px;height:825px;background:#fafafa;"></div>
<div class="r" style="left:1725px;top:33px;width:14px;height:827px;background:#fafafa;"></div>
<div class="r" style="left:1739px;top:0px;width:4px;height:864px;background:#f3f3f3;"></div>
<div class="r" style="left:1743px;top:0px;width:4px;height:911px;background:#000000;"></div>
<div class="r" style="left:1739px;top:0px;width:1px;height:852px;background:#e6e6e6;"></div>
<svg style="left:1714.8px;top:40.2px" width="8" height="6" viewBox="0 0 8 6"><path d="M0.3 5.6 L4 0.4 L7.7 5.6 Z" fill="#8a8a8a"/></svg>
<svg style="left:1728.5px;top:38.5px" width="8" height="6" viewBox="0 0 8 6"><path d="M0.3 5.6 L4 0.4 L7.7 5.6 Z" fill="#8a8a8a"/></svg>
<svg style="left:1714.8px;top:849.3px" width="8" height="6" viewBox="0 0 8 6"><path d="M0.3 0.4 L4 5.6 L7.7 0.4 Z" fill="#8a8a8a"/></svg>
<svg style="left:1728.5px;top:849.3px" width="8" height="6" viewBox="0 0 8 6"><path d="M0.3 0.4 L4 5.6 L7.7 0.4 Z" fill="#8a8a8a"/></svg>
<div class="r" style="left:1212px;top:85px;width:500px;height:1px;background:#d4d4d4;"></div>
<div class="r" style="left:1227px;top:50px;width:77px;height:36px;background:#ffffff;box-sizing:border-box;border:1px solid #d0d0d0;border-bottom:none;"></div>
<div class="t" style="left:1242.70px;top:60px;font-size:12.1px;line-height:20px;color:#3a4a60;font-weight:normal;transform:scaleX(0.935);transform-origin:0 0;">Progress</div>
<div class="t" style="left:1320.30px;top:59px;font-size:12.1px;line-height:20px;color:#4a9ed2;font-weight:normal;transform:scaleX(0.93);transform-origin:0 0;">Events</div>
<div class="t" style="left:1386.60px;top:59px;font-size:12.1px;line-height:20px;color:#4a9ed2;font-weight:normal;transform:scaleX(0.995);transform-origin:0 0;">Location</div>
<svg style="left:1416px;top:97px" width="92" height="92" viewBox="0 0 92 92"><circle cx="45.8" cy="45.8" r="45.65" fill="#23805e"/><path d="M17.95 49.8 L25.1 41.9 L37.7 53.1 L64.9 18.5 L72.8 25.1 L39.1 70.4 Z" fill="#ffffff"/></svg>
<div class="t" style="left:1262.30px;width:400px;text-align:center;top:198px;font-size:12px;line-height:20px;color:#263858;font-weight:bold;transform:scaleX(0.95);transform-origin:50% 0;">Sounding</div>
<div class="t" style="left:1262.00px;width:400px;text-align:center;top:214px;font-size:12px;line-height:20px;color:#263858;font-weight:bold;transform:scaleX(0.965);transform-origin:50% 0;">completed</div>
<div class="t" style="left:1234.40px;top:255px;font-size:12px;line-height:20px;color:#2c3c58;font-weight:normal;">Station name</div>
<div class="t" style="left:1470.00px;top:255px;font-size:11.6px;line-height:20px;color:#2c3c58;font-weight:normal;">Mashtaga</div>
<div class="r" style="left:1227px;top:282.5px;width:470px;height:1px;background:#e6e6e6;"></div>
<div class="t" style="left:1234.40px;top:292px;font-size:12px;line-height:20px;color:#2c3c58;font-weight:normal;">Radiosonde</div>
<div class="t" style="left:1470.00px;top:292px;font-size:11.6px;line-height:20px;color:#2c3c58;font-weight:normal;transform:scaleX(0.9);transform-origin:0 0;">RS41-SG</div>
<div class="r" style="left:1227px;top:319.0px;width:470px;height:1px;background:#e6e6e6;"></div>
<div class="t" style="left:1234.40px;top:328px;font-size:12px;line-height:20px;color:#2c3c58;font-weight:normal;">Serial number</div>
<div class="t" style="left:1470.00px;top:328px;font-size:11.6px;line-height:20px;color:#2c3c58;font-weight:normal;transform:scaleX(0.955);transform-origin:0 0;">W0454151</div>
<div class="r" style="left:1227px;top:355.5px;width:470px;height:1px;background:#e6e6e6;"></div>
<div class="t" style="left:1234.40px;top:365px;font-size:12px;line-height:20px;color:#2c3c58;font-weight:normal;transform:scaleX(0.96);transform-origin:0 0;">Average ascent rate</div>
<div class="t" style="left:1470.00px;top:365px;font-size:11.6px;line-height:20px;color:#2c3c58;font-weight:normal;">4.3 m/s</div>
<div class="t" style="left:1562.50px;top:365px;font-size:12px;line-height:20px;color:#2c3c58;font-weight:normal;">256.2 m/min</div>
<div class="r" style="left:1227px;top:392.0px;width:470px;height:1px;background:#e6e6e6;"></div>
<div class="t" style="left:1234.40px;top:401px;font-size:12px;line-height:20px;color:#2c3c58;font-weight:normal;transform:scaleX(0.99);transform-origin:0 0;">Total frames received</div>
<div class="t" style="left:1470.00px;top:401px;font-size:11.6px;line-height:20px;color:#2c3c58;font-weight:normal;transform:scaleX(0.965);transform-origin:0 0;">100.0 %</div>
<div class="r" style="left:1227px;top:428.5px;width:470px;height:1px;background:#e6e6e6;"></div>
<div class="t" style="left:1234.40px;top:438px;font-size:12px;line-height:20px;color:#2c3c58;font-weight:normal;">Mean number of satellites</div>
<div class="t" style="left:1470.00px;top:438px;font-size:11.6px;line-height:20px;color:#2c3c58;font-weight:normal;">12.0</div>
<div class="r" style="left:1227px;top:465.0px;width:470px;height:1px;background:#e6e6e6;"></div>
<div class="t" style="left:1227.20px;top:482px;font-size:16.2px;line-height:20px;color:#1d2f58;font-weight:bold;transform:scaleX(0.91);transform-origin:0 0;">Flight plan</div>
<div class="r" style="left:1227px;top:552px;width:470px;height:1px;background:#d4d4d4;"></div>
<div class="r" style="left:1313px;top:516px;width:93px;height:37px;background:#ffffff;box-sizing:border-box;border:1px solid #d0d0d0;border-bottom:none;"></div>
<div class="t" style="left:1242.30px;top:525px;font-size:11.9px;line-height:20px;color:#4a9ed2;font-weight:normal;">Ascending</div>
<div class="t" style="left:1328.60px;top:525px;font-size:11.9px;line-height:20px;color:#3a4a60;font-weight:normal;">Descending</div>
<div class="r" style="left:1227px;top:563px;width:470px;height:161.5px;background:#e6f3f9;"></div>
<div class="r" style="left:1227px;top:563.8px;width:470px;height:1.2px;background:#3f8db0;"></div>
<div class="r" style="left:1227px;top:687.9px;width:470px;height:1.1px;background:#3f8db0;"></div>
<svg style="left:1235px;top:577px" width="12" height="10" viewBox="0 0 12 10"><path d="M1.5 5 L4.5 8 L10.5 1.5" fill="none" stroke="#1c2f55" stroke-width="2"/></svg>
<svg style="left:1235px;top:701px" width="12" height="10" viewBox="0 0 12 10"><path d="M1.5 5 L4.5 8 L10.5 1.5" fill="none" stroke="#1c2f55" stroke-width="2"/></svg>
<div class="t" style="left:1256.00px;top:565px;font-size:12.1px;line-height:20px;color:#2c3c58;font-weight:normal;">Maximum altitude reached</div>
<div class="t" style="left:1256.00px;top:580px;font-size:12.1px;line-height:20px;color:#2c3c58;font-weight:normal;transform:scaleX(0.955);transform-origin:0 0;">2025-11-28 09:46:47</div>
<div class="t" style="left:1256.00px;top:606px;font-size:12.1px;line-height:20px;color:#2c3c58;font-weight:normal;transform:scaleX(0.975);transform-origin:0 0;">Increasing pressure</div>
<div class="t" style="left:1256.00px;top:635px;font-size:12.1px;line-height:20px;color:#2c3c58;font-weight:normal;transform:scaleX(0.95);transform-origin:0 0;">28369 m</div>
<div class="t" style="left:1256.00px;top:664px;font-size:12.1px;line-height:20px;color:#2c3c58;font-weight:normal;transform:scaleX(0.93);transform-origin:0 0;">14 hPa</div>
<div class="t" style="left:1256.00px;top:689px;font-size:12.1px;line-height:20px;color:#2c3c58;font-weight:normal;">Sounding completed</div>
<div class="t" style="left:1256.00px;top:704px;font-size:12.1px;line-height:20px;color:#2c3c58;font-weight:normal;transform:scaleX(0.955);transform-origin:0 0;">2025-11-28 10:31:08</div>
<svg style="left:1548px;top:3px" width="18" height="18" viewBox="0 0 18 18"><circle cx="9" cy="9" r="9" fill="#173463"/><text x="9" y="14" text-anchor="middle" font-family="Liberation Sans" font-weight="bold" font-size="14" fill="#fff">?</text></svg>
<div class="t" style="left:1572.00px;top:2px;font-size:11.9px;line-height:20px;color:#34527c;font-weight:normal;">Help</div>
<svg style="left:1604px;top:10px" width="8" height="6" viewBox="0 0 8 6"><path d="M1 1 L4 4 L7 1" fill="none" stroke="#34527c" stroke-width="1.1"/></svg>
<svg style="left:1632px;top:3px" width="17" height="17" viewBox="0 0 17 17"><path d="M5 4.5 Q5 0.6 8.8 0.6 Q12.6 0.6 12.6 4.5 Q12.6 9.5 8.8 11.2 Q5 9.5 5 4.5 Z" fill="none" stroke="#3d5275" stroke-width="1.1"/><path d="M5.3 4.7 Q8.8 3.1 12.3 4.7" fill="none" stroke="#1f3460" stroke-width="1.3"/><path d="M1.2 16.2 Q1 12.6 4.6 11.2 Q8.8 13.6 13 11.2 Q16.6 12.6 16.4 16.2 Q16.2 16.8 15.4 16.8 L2.2 16.8 Q1.3 16.8 1.2 16.2 Z" fill="#173463"/></svg>
<div class="t" style="left:1655.50px;top:2px;font-size:11.9px;line-height:20px;color:#34527c;font-weight:normal;">Operator</div>
<svg style="left:1710px;top:10px" width="8" height="6" viewBox="0 0 8 6"><path d="M1 1 L4 4 L7 1" fill="none" stroke="#34527c" stroke-width="1.1"/></svg>
<div class="r" style="left:0px;top:860px;width:1731px;height:1.8px;background:#e6e6e6;"></div>
<div class="r" style="left:0px;top:861.8px;width:1743px;height:2.2px;background:#f8f8f8;"></div>
<svg style="left:1731px;top:852px" width="9" height="10" viewBox="0 0 9 10"><path d="M8.3 0 L9 0 L9 10 L0 10 L0 8.9 A8.9 8.9 0 0 0 8.3 0 Z" fill="#f6f6f6"/><path d="M8.5 0 A8.5 8.5 0 0 1 0 8.9" fill="none" stroke="#e4e4e4" stroke-width="1.6"/></svg>
<div class="r" style="left:0px;top:864px;width:1743px;height:44px;background:#d0e7ef;"></div>
<div class="r" style="left:0px;top:864px;width:1743px;height:1px;background:#bcd2d9;"></div>
<div class="r" style="left:0px;top:908px;width:1747px;height:3px;background:#1f1f1f;"></div>
<svg style="left:674px;top:876px" width="21" height="21" viewBox="0 0 21 21"><defs><linearGradient id="wg" gradientUnits="userSpaceOnUse" x1="0" y1="0" x2="21" y2="21"><stop offset="0" stop-color="#3ac0f8"/><stop offset="1" stop-color="#0a64c8"/></linearGradient></defs><rect x="0" y="0" width="10" height="10" fill="url(#wg)"/><rect x="11" y="0" width="10" height="10" fill="url(#wg)"/><rect x="0" y="11" width="10" height="10" fill="url(#wg)"/><rect x="11" y="11" width="10" height="10" fill="url(#wg)"/></svg>
<div class="r" style="left:708px;top:872.5px;width:199px;height:28px;background:#eef6f9;box-sizing:border-box;border:1px solid #c9dde4;border-radius:14px;"></div>
<svg style="left:717px;top:879px" width="15" height="15" viewBox="0 0 15 15"><circle cx="6" cy="6" r="4.8" fill="none" stroke="#333" stroke-width="1.6"/><path d="M9.5 9.5 L13.5 13.5" stroke="#333" stroke-width="1.8"/></svg>
<div class="t" style="left:740.40px;top:877px;font-size:11.7px;line-height:20px;color:#5c5c5c;font-weight:normal;">Search</div>
<div class="r" style="left:919px;top:882px;width:16px;height:14px;background:#262626;border-radius:1px;"></div>
<div class="r" style="left:924px;top:876px;width:16px;height:15px;border-radius:1px;background:linear-gradient(135deg,#ffffff,#e6e6e6);"></div>
<div class="r" style="left:924px;top:882px;width:11px;height:9px;background:#bdbdbd;"></div>
<div class="r" style="left:952px;top:869px;width:35px;height:34px;background:#e4f1f6;border-radius:4px;"></div>
<svg style="left:958.7px;top:874.7px" width="22.3" height="22.3" viewBox="0 0 22 22"><defs><linearGradient id="eg1" x1="0" y1="0" x2="1" y2="0.3"><stop offset="0" stop-color="#2aa9ef"/><stop offset="0.5" stop-color="#2ec3c8"/><stop offset="1" stop-color="#5edb5c"/></linearGradient><linearGradient id="eg2" x1="0" y1="0" x2="0" y2="1"><stop offset="0" stop-color="#1f98e6"/><stop offset="1" stop-color="#0a63c6"/></linearGradient></defs><circle cx="11" cy="11" r="10.9" fill="url(#eg2)"/><path d="M0.4 9.5 A10.9 10.9 0 0 1 21.9 10.5 Q21.8 14.6 17.5 14.8 Q13.8 14.8 13.6 12 Q13 7.8 8.2 7.6 Q3.2 7.6 0.4 9.5 Z" fill="url(#eg1)"/><circle cx="11" cy="11.5" r="2.3" fill="#e4f1f6"/><path d="M8.8 12.5 Q11 16 17 16 Q19.6 15.8 20.8 15.2 L20.4 16.9 Q15 19.5 11 17 Q8.8 15 8.8 12.5 Z" fill="#e4f1f6"/><path d="M6.8 9.2 Q4.8 17.5 11 21.2 Q16.5 23.2 20.4 16.9 Q15.5 19.4 11.6 17.2 Q8.2 14.5 9.2 9.6 Z" fill="#0e4f9e"/><path d="M22 15.5 L22 22 L12 22 Q17 22.4 20.4 16.9 Q21.2 15.6 22 15.5 Z" fill="#e4f1f6"/></svg>
<div class="r" style="left:963px;top:901px;width:14px;height:2px;background:#238a96;border-radius:1px;"></div>
<svg style="left:998px;top:876px" width="24" height="20" viewBox="0 0 24 20"><path d="M0.5 2 Q0.5 0.5 2 0.5 L8 0.5 L10 2.5 L23.5 2.5 L23.5 19.5 L0.5 19.5 Z" fill="#e6a817"/><rect x="0.5" y="4" width="23" height="15.5" fill="#fcd04f"/><rect x="5" y="12" width="14" height="7.5" fill="#1d7ad4"/></svg>
<div class="r" style="left:1032px;top:869px;width:31px;height:34px;background:#f9dfe3;border-radius:4px;"></div>
<div class="r" style="left:1063px;top:869px;width:5px;height:34px;background:#f0d9de;border-radius:0 4px 4px 0;"></div>
<svg style="left:1039px;top:875px" width="22" height="22" viewBox="0 0 22 22"><rect width="22" height="22" fill="#ef3b2f"/><path d="M4 11 L8 7 L12 11 L8 15 Z" fill="#fff"/><path d="M12 7 L16 11 L12 15" fill="none" stroke="#fff" stroke-width="1.8"/></svg>
<div class="r" style="left:1048px;top:901px;width:5px;height:2px;background:#c0302a;border-radius:1px;"></div>
<svg style="left:1094px;top:875px" width="14" height="20" viewBox="0 0 14 20"><path d="M1.5 0.8 L1.5 16.2 L5.4 12.9 L8.3 18.4 L10.6 17.3 L8.1 12.3 L12.8 12.3 Z" fill="#fff" stroke="#111" stroke-width="1.1" stroke-linejoin="round"/></svg>
<svg style="left:1527px;top:882px" width="12" height="8" viewBox="0 0 12 8"><path d="M1 6.5 L6 1.5 L11 6.5" fill="none" stroke="#222" stroke-width="1.3"/></svg>
<div class="t" style="left:1557.20px;top:877px;font-size:10.8px;line-height:20px;color:#333;font-weight:normal;transform:scaleX(0.9);transform-origin:0 0;">ENG</div>
<svg style="left:1590px;top:874px" width="45" height="24" viewBox="0 0 45 24"><g fill="none" stroke="#1e1e1e" stroke-width="1.1"><path d="M13.7 5.8 L6.6 5.8 Q5.8 5.8 5.8 6.6 L5.8 15.3 Q5.8 16.1 6.6 16.1 L15.8 16.1"/><path d="M8.2 18.7 L15.8 18.7" stroke="#4a4a4a"/><path d="M9.6 16.1 L9.6 18.7 M14.4 16.1 L14.4 18.7" stroke-width="0.9" stroke="#4a4a4a"/><rect x="15.6" y="5.6" width="4" height="4.9" rx="1.3"/><path d="M17.6 10.5 L17.6 19.4"/><path d="M31.9 9.3 L28.4 9.3 Q27.3 9.3 27.3 10.4 L27.3 13.8 Q27.3 14.9 28.4 14.9 L31.9 14.9"/><path d="M32.6 7.5 L32.6 16.9" stroke="#3a4a4e" stroke-width="1.3"/><path d="M33 9.6 Q34.9 12.2 33 14.7" stroke-width="0.9"/><path d="M36.3 7.3 Q39.5 12.2 36.3 16.9"/><path d="M38.9 6.3 Q42.4 12.2 38.9 17.9" stroke="#a9bcc2" stroke-width="0.8"/></g></svg>
<div class="t" style="left:1303.30px;width:400px;text-align:right;top:870px;font-size:10.3px;line-height:20px;color:#222;font-weight:normal;">11:33</div>
<div class="t" style="left:1303.30px;width:400px;text-align:right;top:884px;font-size:11.3px;line-height:20px;color:#222;font-weight:normal;">28/11/2025</div>
<svg style="left:1711px;top:879px" width="13" height="15" viewBox="0 0 13 15"><path d="M2.6 9.3 L2.6 5.2 Q2.6 0.8 6.5 0.8 Q10.4 0.8 10.4 5.2 L10.4 9.3 L11.8 11.3 L1.2 11.3 Z" fill="none" stroke="#222" stroke-width="1.1" stroke-linejoin="round"/><path d="M5 11.8 A1.5 1.5 0 0 0 8 11.8 Z" fill="#444"/></svg>
</body></html>
